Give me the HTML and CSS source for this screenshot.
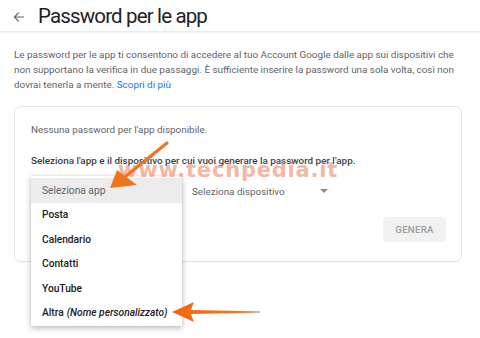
FILE: index.html
```html
<!DOCTYPE html>
<html lang="it">
<head>
<meta charset="utf-8">
<title>Password per le app</title>
<link rel="stylesheet" href="styles.css">
</head>
<body>
<header class="header">
  <svg class="back" width="12" height="12" viewBox="0 0 12 12">
    <path d="M11 6H1.5M5.8 1.6L1.4 6l4.4 4.4" fill="none" stroke="#5f6368" stroke-width="1.2"/>
  </svg>
  <h1 class="title">Password per le app</h1>
</header>
<main class="content">
  <p class="intro">Le password per le app ti consentono di accedere al tuo Account Google dalle app sui dispositivi che non supportano la verifica in due passaggi. È sufficiente inserire la password una sola volta, così non dovrai tenerla a mente. <a class="link" href="#">Scopri di più</a></p>
  <section class="card">
    <p class="empty">Nessuna password per l'app disponibile.</p>
    <p class="instr">Seleziona l'app e il dispositivo per cui vuoi generare la password per l'app.</p>
    <div class="selectors">
      <div class="select select-app">
        <ul class="menu">
          <li class="item item-active">Seleziona app</li>
          <li class="item">Posta</li>
          <li class="item">Calendario</li>
          <li class="item">Contatti</li>
          <li class="item">YouTube</li>
          <li class="item">Altra <em class="custom">(Nome personalizzato)</em></li>
        </ul>
      </div>
      <div class="select select-device">
        <span class="select-label">Seleziona dispositivo</span>
        <span class="caret"></span>
      </div>
    </div>
    <div class="actions">
      <button class="btn">GENERA</button>
    </div>
  </section>
</main>
<div class="watermark">www.techpedia.it</div>
<svg class="arrows" width="480" height="338" viewBox="0 0 480 338">
  <defs>
    <linearGradient id="g2" x1="0" y1="0" x2="1" y2="0">
      <stop offset="0" stop-color="#f06a12"/>
      <stop offset="0.7" stop-color="#f07a22"/>
      <stop offset="1" stop-color="#c8b090"/>
    </linearGradient>
  </defs>
  <line x1="167" y1="143" x2="126" y2="176" stroke="#f0741c" stroke-width="3.2" stroke-linecap="round"/>
  <polygon points="110,188 117,170 137,185" fill="#f0741c"/>
  <polygon points="190,310 260,311.3 260,312.7 190,314" fill="url(#g2)"/>
  <polygon points="172,312 194,302 190,312 194,322" fill="#f06a12"/>
</svg>
</body>
</html>
```

FILE: styles.css
```css
* { box-sizing: border-box; }
html, body { margin: 0; padding: 0; background: #ffffff; }
body {
  font-family: Roboto, "Liberation Sans", Arial, sans-serif;
  color: #5f6368;
  width: 480px;
  height: 338px;
  overflow: hidden;
  position: relative;
}
.header {
  height: 32px;
  display: flex;
  align-items: center;
  padding-left: 13px;
  padding-top: 2px;
  border-bottom: 1px solid #ececec;
  box-shadow: 0 1px 2px rgba(0,0,0,0.06);
}
.back {
  display: block;
  margin-right: 13px;
}
.title {
  margin: 0;
  font-family: Roboto, sans-serif;
  font-weight: 400;
  font-size: 20.5px;
  letter-spacing: -0.85px;
  color: #202124;
  line-height: 1;
}
.content { padding: 0 18px 0 14px; }
.intro {
  margin: 15px 0 0;
  font-size: 9.9px;
  line-height: 15px;
  color: #5f6368;
}
.link { color: #1a73e8; text-decoration: none; }
.card {
  margin-top: 14px;
  border: 1px solid #e4e4e4;
  border-radius: 7px;
  padding: 15px 15px 19px 16px;
  width: 448px;
  box-shadow: 0 1px 2px rgba(0,0,0,0.04);
}
.empty {
  margin: 0;
  font-size: 9.9px;
  line-height: 16px;
  color: #5f6368;
}
.instr {
  margin: 15px 0 0;
  font-size: 9.9px;
  line-height: 16px;
  font-weight: 500;
  color: #3c4043;
}
.selectors {
  display: flex;
  margin-top: 10px;
  height: 24px;
}
.select { position: relative; }
.select-app { width: 161px; }
.select-device {
  display: flex;
  align-items: center;
  height: 24px;
  font-size: 9.9px;
  color: #5f6368;
}
.caret {
  margin-left: 35px;
  width: 0;
  height: 0;
  border-left: 4px solid transparent;
  border-right: 4px solid transparent;
  border-top: 4px solid #8a8a8a;
}
.menu {
  position: absolute;
  left: 0;
  top: -3px;
  width: 151px;
  margin: 0;
  padding: 2px 0 1px;
  list-style: none;
  background: #ffffff;
  box-shadow: 0 2px 6px rgba(0,0,0,0.28), 0 0 1px rgba(0,0,0,0.15);
  z-index: 2;
}
.item {
  height: 24.5px;
  display: flex;
  align-items: center;
  padding-left: 11px;
  font-size: 10.2px;
  font-weight: 500;
  color: #202124;
}
.item-active {
  background: #ececec;
  color: #5f6368;
  font-weight: 400;
}
.custom { font-style: italic; margin-left: 3px; }
.actions {
  display: flex;
  justify-content: flex-end;
  margin-top: 14px;
}
.btn {
  width: 63px;
  height: 25px;
  border: none;
  border-radius: 3px;
  background: #f1f1f1;
  color: #9e9e9e;
  font-family: Roboto, sans-serif;
  font-weight: 500;
  font-size: 9.6px;
  letter-spacing: 0.3px;
  padding: 0;
}
.watermark {
  position: absolute;
  left: 118px;
  top: 158px;
  font-family: "DejaVu Sans", sans-serif;
  font-weight: 700;
  font-size: 21px;
  letter-spacing: 0.8px;
  color: rgba(236, 110, 70, 0.5);
  z-index: 3;
  pointer-events: none;
}
.arrows {
  position: absolute;
  left: 0;
  top: 0;
  z-index: 4;
  pointer-events: none;
}
```
